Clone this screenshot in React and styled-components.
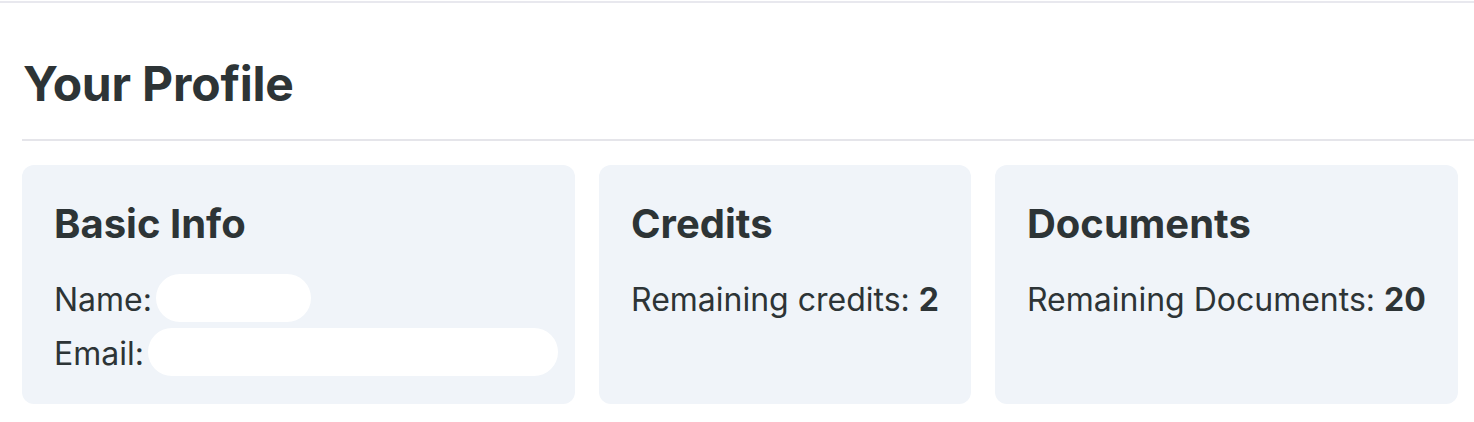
import React from "react";
import styled, { createGlobalStyle } from "styled-components";

const GlobalStyle = createGlobalStyle`
  body {
    margin: 0;
    background: #ffffff;
    font-family: Inter, "Noto Sans", sans-serif;
    color: #2d3436;
  }
`;

const App = () => {
  return (
    <>
      <GlobalStyle />
      <TopBar />
      <Page>
        <Title>Your Profile</Title>
        <Divider />
        <CardRow>
          <Card $w={553}>
            <CardTitle>Basic Info</CardTitle>
            <Lines>
              <Line>
                Name:<Hidden $w={155} />
              </Line>
              <Line>
                Email:<Hidden $w={410} />
              </Line>
            </Lines>
          </Card>
          <Card>
            <CardTitle>Credits</CardTitle>
            <Lines>
              <Line>
                Remaining credits:&nbsp;<b>2</b>
              </Line>
            </Lines>
          </Card>
          <Card>
            <CardTitle>Documents</CardTitle>
            <Lines>
              <Line>
                Remaining Documents:&nbsp;<b>20</b>
              </Line>
            </Lines>
          </Card>
        </CardRow>
      </Page>
    </>
  );
};

export default App;

const TopBar = styled.div`
  height: 1px;
  border-bottom: 2px solid #e8e8ee;
`;

const Page = styled.main`
  padding: 0 0 0 22px;
`;

const Title = styled.h1`
  margin: 0;
  padding: 52px 0 26px 1px;
  font-size: 48px;
  font-weight: 700;
  line-height: 58px;
  letter-spacing: -0.2px;
`;

const Divider = styled.hr`
  margin: 0;
  border: none;
  border-top: 2px solid #e5e5ea;
`;

const CardRow = styled.div`
  display: flex;
  gap: 24px;
  margin-top: 24px;
`;

const Card = styled.section`
  background: #f0f4f9;
  border-radius: 12px;
  padding: 35px 32px 28px 32px;
  height: 239px;
  box-sizing: border-box;
  overflow: hidden;
  ${(p) => (p.$w ? `width: ${p.$w}px; flex: none;` : "")}
`;

const CardTitle = styled.h2`
  margin: 0 0 26px;
  font-size: 40px;
  font-weight: 700;
  line-height: 48px;
`;

const Lines = styled.div`
  display: flex;
  flex-direction: column;
  gap: 6px;
`;

const Line = styled.div`
  display: flex;
  align-items: flex-start;
  padding-top: 4px;
  font-size: 32px;
  line-height: 44px;
  white-space: nowrap;

  b {
    font-weight: 700;
  }
`;

const Hidden = styled.span`
  display: inline-block;
  flex: none;
  width: ${(p) => p.$w}px;
  height: 48px;
  margin: -4px 0 0 4px;
  border-radius: 24px;
  background: #ffffff;
`;
